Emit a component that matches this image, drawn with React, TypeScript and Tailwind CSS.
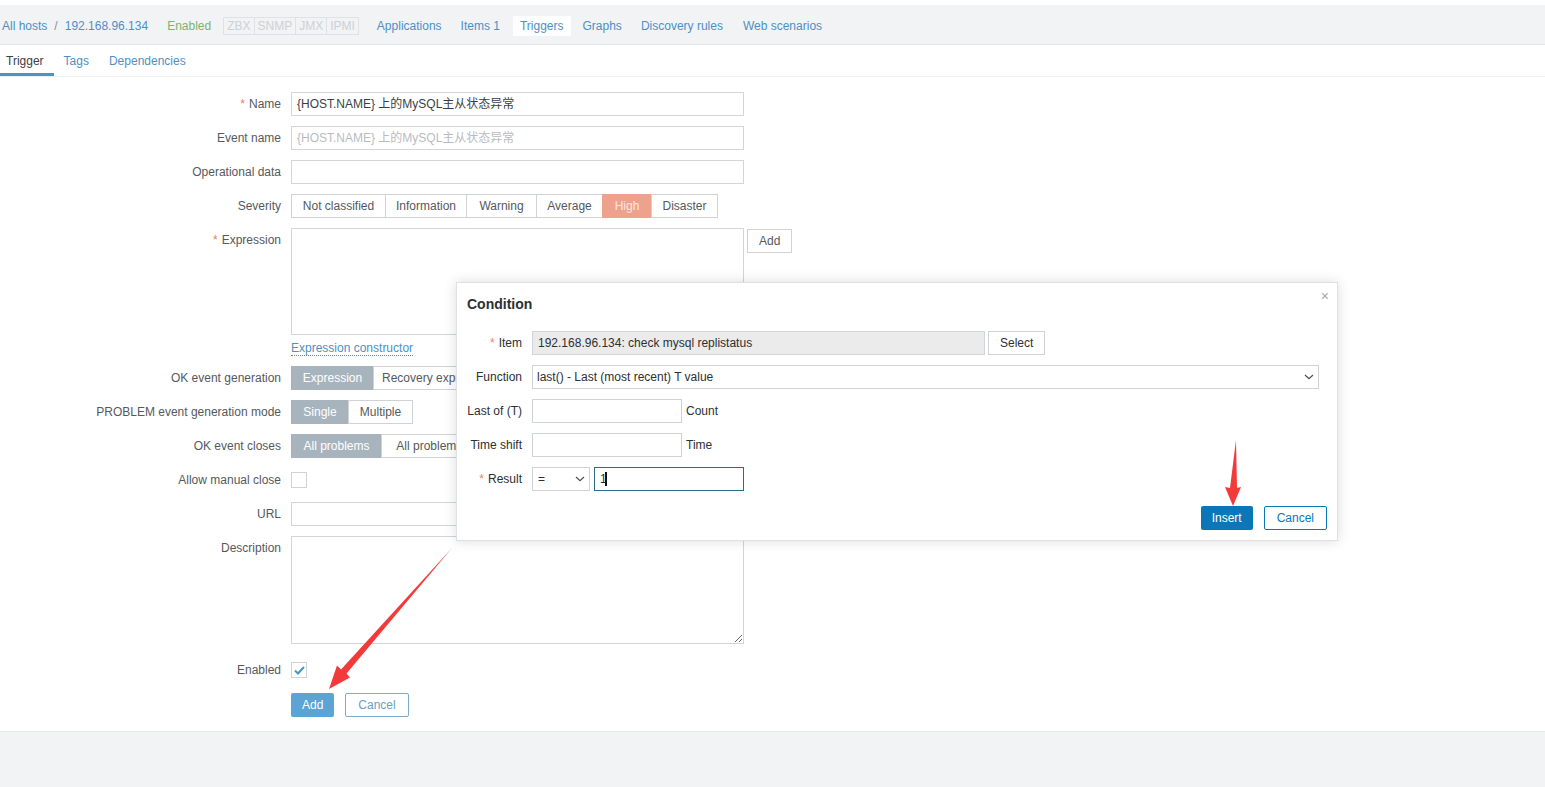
import React from "react"

const font = "font-['Liberation_Sans',Arial,'Noto_Sans_CJK_SC',sans-serif]"

function Chevron() {
  return (
    <svg width="10" height="6" viewBox="0 0 10 6">
      <path d="M1 1l4 3.6L9 1" fill="none" stroke="#4a4f54" strokeWidth="1.2" />
    </svg>
  )
}

function Req() {
  return <span className="mr-[4px] text-[#e8826f]">*</span>
}

function Row({
  label,
  req,
  children,
  className = "",
}: {
  label: string
  req?: boolean
  children: React.ReactNode
  className?: string
}) {
  return (
    <div className={`flex items-start gap-[10px] ${className}`}>
      <div className="w-[281px] shrink-0 text-right leading-[24px] text-[#55595d]">
        {req && <Req />}
        {label}
      </div>
      <div className="flex items-start">{children}</div>
    </div>
  )
}

function ModalRow({ label, req, children }: { label: string; req?: boolean; children: React.ReactNode }) {
  return (
    <div className="flex items-center gap-[10px]">
      <div className="w-[55px] shrink-0 whitespace-nowrap text-right leading-[24px] text-[#2b3034]">
        {req && <Req />}
        {label}
      </div>
      <div className="flex items-center">{children}</div>
    </div>
  )
}

// segmented radio; the part under the dialog is cut off at the dialog's edge
function Segmented({ items, active }: { items: [string, number][]; active: number }) {
  return (
    <div className="w-[165px] overflow-hidden">
      <div className="flex h-[24px] w-max whitespace-nowrap">
        {items.map(([t, w], i) => (
          <div
            key={t}
            style={{ width: w }}
            className={`flex h-[24px] items-center justify-center border ${
              i === active ? "border-[#a7b4be] bg-[#a7b4be] text-white" : "border-[#cfd3d6] bg-white text-[#55595d]"
            } ${i > 0 ? "-ml-px" : ""}`}
          >
            {t}
          </div>
        ))}
      </div>
    </div>
  )
}

const navLink = "text-[#4e90c4]"

export default function App() {
  const severities: [string, number][] = [
    ["Not classified", 95],
    ["Information", 82],
    ["Warning", 71],
    ["Average", 67],
    ["High", 50],
    ["Disaster", 67],
  ]

  return (
    <div className={`relative flex h-[787px] w-[1545px] flex-col overflow-hidden bg-white text-[12px] ${font}`}>
      <div className="h-[5px] shrink-0" />

      {/* host navigation */}
      <div className="flex h-[40px] shrink-0 items-center border-b border-[#e4e7e9] bg-[#f2f3f4] pt-[3px] whitespace-nowrap">
        <span className={`ml-[2px] ${navLink}`}>All hosts</span>
        <span className="ml-[7px] text-[#8a9094]">/</span>
        <span className={`ml-[7px] ${navLink}`}>192.168.96.134</span>
        <span className="ml-[19px] text-[#7bb274]">Enabled</span>
        <div className="ml-[12px] flex h-[18px] border border-[#dfe2e4] text-[#cdd1d4] leading-[16px]">
          <span className="px-[3px]">ZBX</span>
          <span className="border-l border-[#dfe2e4] px-[3px]">SNMP</span>
          <span className="border-l border-[#dfe2e4] px-[3px]">JMX</span>
          <span className="border-l border-[#dfe2e4] px-[3px]">IPMI</span>
        </div>
        <span className={`ml-[18px] ${navLink}`}>Applications</span>
        <span className={`ml-[19px] ${navLink}`}>Items 1</span>
        <span className={`ml-[13px] flex h-[20px] items-center bg-white px-[7px] ${navLink}`}>Triggers</span>
        <span className={`ml-[12px] ${navLink}`}>Graphs</span>
        <span className={`ml-[19px] ${navLink}`}>Discovery rules</span>
        <span className={`ml-[20px] ${navLink}`}>Web scenarios</span>
      </div>

      {/* tabs */}
      <div className="flex h-[32px] shrink-0 items-stretch border-b border-[#eceef0]">
        <div className="flex items-center border-b-[3px] border-[#4a95c6] pl-[6px] pr-[10px] pt-[3px] text-[#3b4147]">
          Trigger
        </div>
        <div className={`flex items-center px-[10px] ${navLink}`}>Tags</div>
        <div className={`flex items-center px-[10px] ${navLink}`}>Dependencies</div>
      </div>

      {/* form */}
      <div className="flex shrink-0 flex-col pb-[14px] pt-[15px]">
        <div className="flex flex-col gap-[10px]">
          <Row label="Name" req>
            <div className="h-[24px] w-[453px] border border-[#d3d6d8] px-[5px] leading-[22px] text-[#3a3f44]">
              {"{HOST.NAME} 上的MySQL主从状态异常"}
            </div>
          </Row>
          <Row label="Event name">
            <div className="h-[24px] w-[453px] border border-[#d3d6d8] px-[5px] leading-[22px] text-[#b9bcbf]">
              {"{HOST.NAME} 上的MySQL主从状态异常"}
            </div>
          </Row>
          <Row label="Operational data">
            <div className="h-[24px] w-[453px] border border-[#d3d6d8]" />
          </Row>
          <Row label="Severity">
            <div className="flex h-[24px] whitespace-nowrap">
              {severities.map(([t, w], i) => (
                <div
                  key={t}
                  style={{ width: w }}
                  className={`flex h-[24px] items-center justify-center border ${
                    t === "High"
                      ? "border-[#eea28e] bg-[#eea28e] text-[#fde6df]"
                      : "border-[#cfd3d6] bg-white text-[#55595d]"
                  } ${i > 0 ? "-ml-px" : ""}`}
                >
                  {t}
                </div>
              ))}
            </div>
          </Row>
          <Row label="Expression" req>
            <div className="flex flex-col">
              <div className="flex items-start">
                <div className="h-[107px] w-[453px] border border-[#d3d6d8]" />
                <div className="ml-[3px] mt-px flex h-[24px] items-center border border-[#cfd3d6] px-[11px] text-[#55595d]">
                  Add
                </div>
              </div>
              <div className="mt-[6px] h-[15px] leading-[14px]">
                <span className="border-b border-dotted border-[#4e90c4] text-[#4e90c4]">Expression constructor</span>
              </div>
            </div>
          </Row>
          <Row label="OK event generation">
            <Segmented
              items={[
                ["Expression", 83],
                ["Recovery expression", 130],
                ["None", 50],
              ]}
              active={0}
            />
          </Row>
          <Row label="PROBLEM event generation mode">
            <Segmented
              items={[
                ["Single", 58],
                ["Multiple", 65],
              ]}
              active={0}
            />
          </Row>
          <Row label="OK event closes">
            <Segmented
              items={[
                ["All problems", 91],
                ["All problems if tag values match", 200],
              ]}
              active={0}
            />
          </Row>
          <Row label="Allow manual close">
            <div className="flex h-[24px] items-center">
              <div className="h-[16px] w-[16px] border border-[#cfd3d6] bg-white" />
            </div>
          </Row>
          <Row label="URL">
            <div className="h-[24px] w-[453px] border border-[#d3d6d8]" />
          </Row>
          <Row label="Description">
            <textarea
              readOnly
              className="block h-[108px] w-[453px] border border-[#d3d6d8] outline-none"
            />
          </Row>
        </div>
        <Row label="Enabled" className="mt-[14px]">
          <div className="flex h-[24px] items-center">
            <div className="flex h-[16px] w-[16px] items-center justify-center border border-[#cfd3d6] bg-white">
              <svg width="11" height="9" viewBox="0 0 11 9">
                <path d="M1 4.5l3 3L10 1" fill="none" stroke="#4a95c6" strokeWidth="2" />
              </svg>
            </div>
          </div>
        </Row>
        <div className="ml-[291px] mt-[11px] flex gap-[11px]">
          <div className="flex h-[24px] items-center rounded-[2px] bg-[#5ba4d4] px-[11px] text-white">Add</div>
          <div className="flex h-[24px] items-center rounded-[2px] border border-[#7aaccc] bg-white px-[12px] text-[#6b9fc9]">
            Cancel
          </div>
        </div>
      </div>

      <div className="flex-1 border-t border-[#e6e8ea] bg-[#f2f3f4]" />

      {/* condition dialog */}
      <div className="absolute left-[456px] top-[282px] flex w-[882px] flex-col border border-[#dde1e4] bg-white px-[10px] pb-[10px] pt-[11px] shadow-[0_0_12px_rgba(0,0,0,0.14)]">
        <div className="absolute right-[8px] top-[6px] text-[14px] leading-[14px] text-[#a3a8ac]">×</div>
        <div className="h-[20px] text-[14px] font-bold leading-[20px] text-[#2b3034]">Condition</div>
        <div className="mt-[17px] flex flex-col gap-[10px]">
          <ModalRow label="Item" req>
            <div className="h-[24px] w-[453px] border border-[#d3d6d8] bg-[#ebebeb] px-[5px] leading-[22px] text-[#2b3034]">
              192.168.96.134: check mysql replistatus
            </div>
            <div className="ml-[3px] flex h-[24px] items-center border border-[#cfd3d6] bg-white px-[11px] text-[#2b3034]">
              Select
            </div>
          </ModalRow>
          <ModalRow label="Function">
            <div className="flex h-[24px] w-[787px] items-center justify-between border border-[#cfd3d6] pl-[4px] pr-[4px] text-[#2b3034]">
              <span>last() - Last (most recent) T value</span>
              <Chevron />
            </div>
          </ModalRow>
          <ModalRow label="Last of (T)">
            <div className="h-[24px] w-[150px] border border-[#cfd3d6]" />
            <span className="ml-[4px] text-[#2b3034]">Count</span>
          </ModalRow>
          <ModalRow label="Time shift">
            <div className="h-[24px] w-[150px] border border-[#cfd3d6]" />
            <span className="ml-[4px] text-[#2b3034]">Time</span>
          </ModalRow>
          <ModalRow label="Result" req>
            <div className="flex h-[24px] w-[58px] items-center justify-between border border-[#cfd3d6] pl-[5px] pr-[4px] text-[#2b3034]">
              <span>=</span>
              <Chevron />
            </div>
            <div className="ml-[4px] flex h-[24px] w-[150px] items-center border border-[#2d6b8c] px-[5px] text-[#2b3034]">
              <span>1</span>
              <span className="ml-[-2px] h-[14px] w-[2px] bg-[#111]" />
            </div>
          </ModalRow>
        </div>
        <div className="mt-[15px] flex justify-end gap-[11px]">
          <div className="flex h-[24px] items-center rounded-[2px] bg-[#0b76b8] px-[11px] text-white">Insert</div>
          <div className="flex h-[24px] items-center rounded-[2px] border border-[#0b76b8] bg-white px-[12px] text-[#0b76b8]">
            Cancel
          </div>
        </div>
      </div>

      {/* annotation arrows */}
      <svg className="pointer-events-none absolute left-0 top-0" width="1545" height="787" viewBox="0 0 1545 787">
        <polygon
          points="452,548 346.5,673.5 350,677.5 329,689 337,665.5 341,669.5"
          fill="#f23a3a"
        />
        <polygon points="1236,440 1237,488 1241,487 1233,506 1225,487 1230,488" fill="#f23a3a" />
      </svg>
    </div>
  )
}
